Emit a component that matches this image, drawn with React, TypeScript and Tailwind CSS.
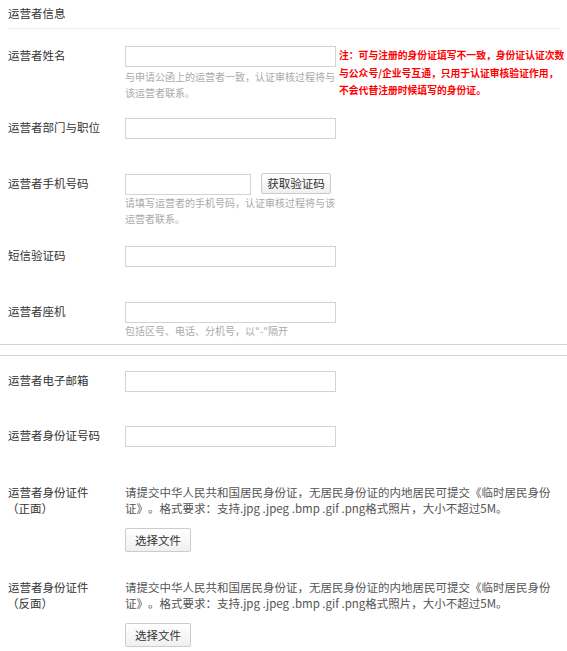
import React from 'react';

const Label = ({ children }: { children: React.ReactNode }) => (
  <div className="w-[125px] shrink-0 pl-2 text-[11.5px] leading-[18px] text-[#333]">{children}</div>
);

const Input = ({ width = 'w-[211px]' }: { width?: string }) => (
  <input
    type="text"
    className={`${width} block h-[21px] border border-[#cdd4dc] bg-white outline-none`}
  />
);

const Hint = ({ children }: { children: React.ReactNode }) => (
  <p className="w-[211px] text-[10px] leading-[16px] text-[#aaa]">{children}</p>
);

const FileRow = ({ side, className }: { side: string; className: string }) => (
  <div className={`flex ${className}`}>
    <div className="w-[125px] shrink-0 pl-2 text-[11.5px] leading-[16px] text-[#333]">
      运营者身份证件
      <br />
      <span className="-ml-[1px]">（{side}）</span>
    </div>
    <div className="flex-1 pr-2 text-[11.5px] leading-[16px]">
      <p className="text-[#555]">
        请提交中华人民共和国居民身份证，无居民身份证的内地居民可提交《临时居民身份证》。格式要求：支持.jpg .jpeg .bmp .gif .png格式照片，大小不超过5M。
      </p>
      <button className="mt-[12px] block h-[24px] w-[66px] rounded-[2px] border border-[#ccc] bg-gradient-to-b from-white to-[#f0f0f0] text-[#333]">
        选择文件
      </button>
    </div>
  </div>
);

export default function App() {
  return (
    <div
      className="min-h-[651px] w-[567px] overflow-hidden bg-white [text-spacing-trim:space-all]"
      style={{ fontFamily: '"Microsoft YaHei", "Noto Sans CJK SC", "Liberation Sans", sans-serif' }}
    >
      <div className="mx-2 flex h-[29px] items-center border-b border-[#ececec] text-[11.5px] text-[#333]">
        运营者信息
      </div>

      {/* 姓名 */}
      <div className="flex pt-[17px]">
        <Label>运营者姓名</Label>
        <div>
          <Input />
          <div className="mt-[2px]">
            <Hint>与申请公函上的运营者一致，认证审核过程将与该运营者联系。</Hint>
          </div>
        </div>
        <p className="ml-[3px] mt-[1px] whitespace-nowrap text-[9.8px] font-bold leading-[17.5px] text-[#f00]">
          注：可与注册的身份证填写不一致，身份证认证次数
          <br />
          与公众号/企业号互通，只用于认证审核验证作用，
          <br />
          不会代替注册时候填写的身份证。
        </p>
      </div>

      {/* 部门与职位 */}
      <div className="mt-[17px] flex">
        <Label>运营者部门与职位</Label>
        <Input />
      </div>

      {/* 手机号码 */}
      <div className="mt-[35px] flex">
        <Label>运营者手机号码</Label>
        <div>
          <div className="flex items-start">
            <Input width="w-[126px]" />
            <button className="-mt-[1px] ml-[10px] h-[21px] w-[70px] rounded-[2px] border border-[#ccc] bg-gradient-to-b from-white to-[#f0f0f0] text-[11.5px] leading-[19px] text-[#333]">
              获取验证码
            </button>
          </div>
          <Hint>请填写运营者的手机号码，认证审核过程将与该运营者联系。</Hint>
        </div>
      </div>

      {/* 短信验证码 */}
      <div className="mt-[19px] flex">
        <Label>短信验证码</Label>
        <Input />
      </div>

      {/* 座机 */}
      <div className="mt-[35px] flex">
        <Label>运营者座机</Label>
        <div>
          <Input />
          <Hint>包括区号、电话、分机号，以"-"隔开</Hint>
        </div>
      </div>

      <div className="mt-[5px] h-[12px] border-y border-[#d2d2d2]" />

      {/* 电子邮箱 */}
      <div className="mt-[15px] flex">
        <Label>运营者电子邮箱</Label>
        <Input />
      </div>

      {/* 身份证号码 */}
      <div className="mt-[34px] flex">
        <Label>运营者身份证号码</Label>
        <Input />
      </div>

      <FileRow side="正面" className="mt-[37px]" />
      <FileRow side="反面" className="mt-[27px]" />
    </div>
  );
}
